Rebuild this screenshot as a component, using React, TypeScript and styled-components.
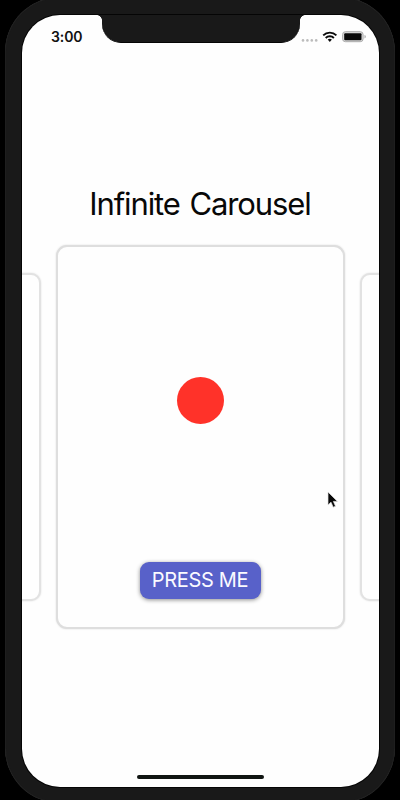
import React from "react";
import styled, { createGlobalStyle } from "styled-components";

const GlobalStyle = createGlobalStyle`
  *, *::before, *::after { box-sizing: border-box; }
  body {
    margin: 0;
    background: #000;
    font-family: Inter, "Liberation Sans", sans-serif;
  }
`;

const Stage = styled.main`
  height: 800px;
  width: 400px;
  overflow: hidden;
  display: flex;
  justify-content: center;
  align-items: center;
`;

const PhoneFrame = styled.div`
  flex: none;
  width: 390px;
  height: 806px;
  padding: 18px 16px 16px 17px;
  border-radius: 55px;
  background: #191919;
  box-shadow: inset 0 0 1px #555;
`;

const Screen = styled.div`
  position: relative;
  display: flex;
  flex-direction: column;
  height: 772px;
  overflow: hidden;
  border-radius: 38px;
  background: #fefefe;
  box-shadow: 0 0 0 1px #050505;
`;

const StatusBar = styled.header`
  display: grid;
  grid-template-columns: 80px 198px 79px;
  height: 44px;
`;

const Clock = styled.time`
  padding: 13px 0 0 29px;
  font-size: 14px;
  line-height: 17px;
  font-weight: 600;
  letter-spacing: -0.1px;
  color: #111;
`;

const Notch = styled.div`
  position: relative;
  height: 28px;
  border-radius: 0 0 19px 19px;
  background: #191919;
  border-bottom: 1px solid #050505;

  &::before,
  &::after {
    content: "";
    position: absolute;
    top: 0;
    width: 5px;
    height: 5px;
  }
  &::before {
    right: 100%;
    background: radial-gradient(circle at 0 100%, transparent 4.5px, #191919 5px);
  }
  &::after {
    left: 100%;
    background: radial-gradient(circle at 100% 100%, transparent 4.5px, #191919 5px);
  }
`;

const Indicators = styled.div`
  padding: 15px 0 0 1px;
`;

const Title = styled.h1`
  margin: 125px 0 0;
  height: 61px;
  text-align: center;
  font-size: 31px;
  line-height: 40px;
  font-weight: 400;
  letter-spacing: -1.1px;
  word-spacing: 2px;
  text-indent: -1px;
  color: #080808;
`;

const Carousel = styled.section`
  display: flex;
  justify-content: center;
  align-items: center;
  gap: 15px;
  height: 384px;
`;

const Card = styled.article<{ $active?: boolean }>`
  flex: none;
  display: flex;
  flex-direction: column;
  align-items: center;
  width: ${(p) => (p.$active ? 289 : 248)}px;
  height: ${(p) => (p.$active ? 384 : 328)}px;
  padding-top: 130px;
  border: 2px solid ${(p) => (p.$active ? "#dedede" : "#e2e2e2")};
  border-radius: ${(p) => (p.$active ? 11 : 10)}px;
  background: #fefefe;
  box-shadow: 0 0 2px rgba(0, 0, 0, 0.14);
`;

const Dot = styled.div`
  width: 47px;
  height: 47px;
  border-radius: 50%;
  background: #ff3229;
`;

const PressButton = styled.button`
  margin-top: 138px;
  width: 121px;
  height: 37px;
  padding: 0;
  border: 0;
  border-radius: 9px;
  background: #5861c9;
  box-shadow: 0 1px 4px rgba(0, 0, 0, 0.45);
  color: #fafaff;
  font-family: inherit;
  font-size: 20px;
  line-height: 37px;
  font-weight: 400;
  letter-spacing: -0.3px;
  text-indent: -1px;
  white-space: nowrap;
`;

const HomeIndicator = styled.div`
  margin: auto auto 8px;
  width: 127px;
  height: 4px;
  border-radius: 2px;
  background: #101512;
`;

const Pointer = styled.svg`
  position: absolute;
  left: 305px;
  top: 476px;
`;

function StatusIcons() {
  return (
    <svg width="70" height="16" viewBox="0 0 70 16" aria-hidden="true">
      <g fill="#bcbcbc">
        {[2, 6.4, 10.8, 15.2].map((x) => (
          <circle key={x} cx={x} cy="10.4" r="1.3" />
        ))}
      </g>
      <g fill="none" stroke="#0b0b0b" strokeWidth="1.9">
        <path d="M22.2 5.4a9.2 9.2 0 0 1 13.2 0" />
        <path d="M24.7 8a5.8 5.8 0 0 1 8.2 0" />
      </g>
      <path d="M26.7 9.6a3.1 3.1 0 0 1 4.2 0L28.8 11.9Z" fill="#0b0b0b" />
      <rect x="41.6" y="1.7" width="20.5" height="10" rx="2.8" fill="#dcdcdc" stroke="#aaa" />
      <rect x="43.2" y="3.2" width="17.3" height="7" rx="1" fill="#080808" />
      <path d="M63.5 5v3.4q1.3-.3 1.3-1.7T63.5 5Z" fill="#aaa" />
    </svg>
  );
}

export default function App() {
  return (
    <>
      <GlobalStyle />
      <Stage>
        <PhoneFrame>
          <Screen>
            <StatusBar>
              <Clock>3:00</Clock>
              <Notch />
              <Indicators>
                <StatusIcons />
              </Indicators>
            </StatusBar>
            <Title>Infinite Carousel</Title>
            <Carousel>
              <Card />
              <Card $active>
                <Dot />
                <PressButton>PRESS ME</PressButton>
              </Card>
              <Card />
            </Carousel>
            <HomeIndicator />
            <Pointer width="12" height="19" viewBox="0 0 12 19" aria-hidden="true">
              <path
                d="M1 1v13l3-2.8 2.2 5 2.3-1-2.1-4.8H10.5Z"
                fill="#080808"
                stroke="#e4e4e4"
                strokeWidth=".7"
              />
            </Pointer>
          </Screen>
        </PhoneFrame>
      </Stage>
    </>
  );
}
